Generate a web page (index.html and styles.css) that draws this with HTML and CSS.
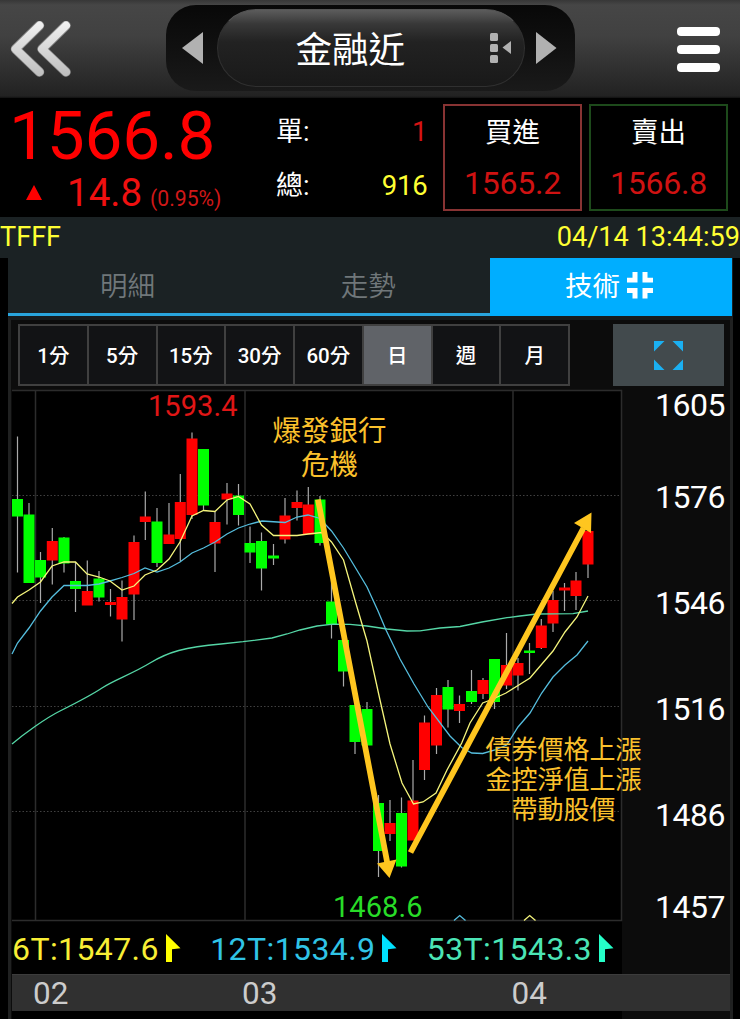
FILE: index.html
```html
<!DOCTYPE html>
<html lang="zh-Hant">
<head>
<meta charset="utf-8">
<title>金融近</title>
<link rel="stylesheet" href="styles.css">
</head>
<body>
<div class="app">
  <header class="topbar">
    <svg class="back" width="64" height="56" viewBox="8 21 64 56">
      <defs><linearGradient id="metal" x1="0" y1="21" x2="0" y2="77" gradientUnits="userSpaceOnUse"><stop offset="0" stop-color="#f2f2f2"/><stop offset="1" stop-color="#bdbdbd"/></linearGradient></defs>
      <path class="back-edge" d="M39.5 25.5 15.5 49 39.5 72M66 25.5 42 49 66 72"/>
      <path class="back-face" d="M39.5 25.5 15.5 49 39.5 72M66 25.5 42 49 66 72"/>
    </svg>
    <div class="switcher">
      <svg width="22" height="32" viewBox="0 0 22 32"><path class="gray" d="M0 16 21 0V32Z"/></svg>
      <div class="pill">
        <span class="title">金融近</span>
        <svg class="list-icon" width="22" height="30" viewBox="0 0 22 30"><rect class="gray" width="8" height="8" rx="1.5"/><rect class="gray" y="11" width="8" height="8" rx="1.5"/><rect class="gray" y="22" width="8" height="8" rx="1.5"/><path class="gray" d="M12.500 14.500 21 8V21Z"/></svg>
      </div>
      <svg width="22" height="32" viewBox="0 0 22 32"><path class="gray" d="M20.500 16 0 0V32Z"/></svg>
    </div>
    <div class="menu"><i></i><i></i><i></i></div>
  </header>

  <section class="quote">
    <div class="price">
      <div class="last">1566.8</div>
      <div class="change"><span class="up"></span><span class="diff">14.8</span><span class="pct">(0.95%)</span></div>
    </div>
    <div class="volume">
      <div class="vol-row"><span>單:</span><span class="one">1</span></div>
      <div class="vol-row"><span>總:</span><span class="total">916</span></div>
    </div>
    <div class="deal buy"><span>買進</span><b>1565.2</b></div>
    <div class="deal sell"><span>賣出</span><b>1566.8</b></div>
  </section>

  <div class="status"><span>TFFF</span><span>04/14 13:44:59</span></div>

  <nav class="tabs">
    <div class="tab">明細</div>
    <div class="tab">走勢</div>
    <div class="tab active">技術
      <svg width="26" height="27" viewBox="0 0 26 27"><path d="M5.500 0H10.500V10.500H0V5.700H5.500ZM15.500 0H20.500V5.700H26V10.500H15.500ZM0 16H10.500V26.500H5.500V21H0ZM15.500 16H26V21H20.500V26.500H15.500Z"/></svg>
    </div>
  </nav>

  <main class="panel">
    <div class="tools">
      <div class="periods"><span>1分</span><span>5分</span><span>15分</span><span>30分</span><span>60分</span><span class="on">日</span><span>週</span><span>月</span></div>
      <div class="full"><svg width="29" height="29" viewBox="0 0 29 29"><path d="M0 0H10.500L0 10.500ZM18.500 0H29V10.500ZM0 18.500 10.500 29H0ZM29 18.500V29H18.500Z"/></svg></div>
    </div>
    <svg class="chart" width="717" height="532" viewBox="12 389 717 532">
      <rect class="plot" x="12" y="390.5" width="609.500" height="530"/>
      <path class="grid" d="M12 390.500H621.500V920.500H12M35.500 390V920M245 390V920M513 390V920"/>
      <path class="dots" d="M12 495.500H621M12 600.500H621M12 706.500H621M12 811.500H621"/>
      <g id="candles"></g>
      <path class="ma ma53" d="M12 744C25 733 46 718 60 711S90 696 102 688S132 674 150 663S185 647 221 644L243 641.700L272 638L287 634L300 630L317 626L333 624.200L350 624.300L367 626L387 629L407 631L420 630.800L440 628L460 626.500L482 622L507 617.700L520 616L537 614L573 613.700L588 611"/>
      <path class="ma ma12" d="M12 654 17.500 643 29 628 40.500 611 52 597 64 585.500H87L99 584 110 581 122 577.500 134 573.500 145 568 157 572 169 568 180 562 192 553 203.500 548 215 542 227 534 238.500 528 250 524 262 521 285 522.500 297 517 308 515 320 518.500 331.500 531 343.500 548 355 567 367 587 378 611 386 630 400 659 414 684 428 707 450 736 461.700 747.500 471.700 753 482.700 753.500 495 750 506.700 745 518 727 530 713 541.700 693 553 677 565 665 577 655 588 641"/>
      <path class="ma ma6" d="M12 603.500 17.500 597 29 590 40.500 582 52 566 64 562H75.500L87 574 99 577 110 581 122 590 134 586 145 575 157 570 169 559 180 542 192 516 203.500 510.500 215 511.500 227 500 238.500 496.500 250 504 261.500 525 273.500 535.500H297L308 534 322 532.500 331.500 542 343.500 560 355.500 602 367 641 380 700 390 744 402 783 413.500 804 423 802 436 793 447 770 461.700 743 470 723 482.700 703 493 699 506 693 530 678 553 651 565 632 577 617 588 596"/>
      <path class="ma ma12" d="M454 920.500 459.700 915.500 465.500 920.500"/>
      <path class="ma ma6" d="M524 920.500 529.700 915.500 535.500 920.500"/>
      <path class="arrow" d="M318 499.500 387.500 864M410.500 852.500 583.500 528"/>
      <path class="head" d="M377 863.500 396.500 859.500 389.500 878ZM591.500 512.500 591 533 574 523Z"/>
      <text class="num high" x="148" y="415.500" textLength="89.500">1593.4</text>
      <text class="num low" x="333" y="916.500" textLength="89.500">1468.6</text>
      <g class="note note-lg"><text x="329.500" y="441" textLength="114">爆發銀行</text><text x="329.500" y="474.500" textLength="57">危機</text></g>
      <g class="note"><text x="563.500" y="759" textLength="156">債券價格上漲</text><text x="563.500" y="789" textLength="156">金控淨值上漲</text><text x="563.500" y="819" textLength="104">帶動股價</text></g>
      <g class="axis"><text x="725.500" y="416" textLength="70.500">1605</text><text x="725.500" y="507.500" textLength="70.500">1576</text><text x="725.500" y="614" textLength="70.500">1546</text><text x="725.500" y="720" textLength="70.500">1516</text><text x="725.500" y="826" textLength="70.500">1486</text><text x="725.500" y="917.500" textLength="70.500">1457</text></g>
    </svg>
    <div class="averages">
      <div class="avg y"><span>6T:1547.6</span><svg width="15" height="28" viewBox="0 0 15 28"><path d="M0 0 14.500 14.200 6 15.200V28H0Z"/></svg></div>
      <div class="avg c"><span>12T:1534.9</span><svg width="15" height="28" viewBox="0 0 15 28"><path d="M0 0 14.500 14.200 6 15.200V28H0Z"/></svg></div>
      <div class="avg g"><span>53T:1543.3</span><svg width="15" height="28" viewBox="0 0 15 28"><path d="M0 0 14.500 14.200 6 15.200V28H0Z"/></svg></div>
    </div>
    <div class="months"><span>02</span><span>03</span><span>04</span></div>
    <div class="foot"></div>
  </main>
</div>
<script src="chart.js"></script>
</body>
</html>
```
FILE: styles.css
```css
* { box-sizing: border-box; }
body { margin: 0; background: #000; font-family: Roboto, "Noto Sans CJK TC", sans-serif; color: #fff; }
svg { display: block; flex: none; }
.app { width: 740px; height: 1019px; overflow: hidden; display: flex; flex-direction: column; }

.topbar { height: 98px; flex: none; display: flex; align-items: flex-start; background: linear-gradient(#373737 0, #464646 5px, #414141 35px, #222 96px, #111 98px); }
.back { margin: 21px 0 0 8px; }
.back path { fill: none; stroke-linecap: round; stroke-linejoin: round; }
.back-edge { stroke: #888; stroke-width: 9.500; }
.back-face { stroke: url(#metal); stroke-width: 8; }
.switcher { margin: 5px 0 0 94px; width: 409px; height: 86px; border-radius: 30px; background: linear-gradient(#080808, #121212 60%, #1a1a1a); display: flex; align-items: center; justify-content: space-between; padding: 0 17px 0 16px; }
.gray { fill: #b1b1b1; }
.pill { width: 308px; height: 78px; margin-right: -1px; border-radius: 39px; border: 1.500px solid #303030; border-top-color: #555; background: linear-gradient(#5c5c5c 0, #383838 14px, #222 32px, #191919); display: flex; align-items: center; padding-left: 78px; }
.title { font-size: 36.500px; line-height: 50px; width: 110px; padding-top: 5px; }
.list-icon { margin-left: 84px; margin-bottom: 1px; }
.menu { margin: 27px 0 0 102px; display: flex; flex-direction: column; gap: 9.500px; }
.menu i { width: 43px; height: 8.500px; border-radius: 4px; background: #fff; }

.quote { height: 119px; flex: none; display: flex; background: #000; }
.price { width: 276px; padding: 5px 0 0 9px; color: #f00; }
.last { font-size: 67.500px; letter-spacing: -.2px; line-height: 66px; height: 70px; }
.change { display: flex; align-items: baseline; line-height: 40px; }
.up { margin-left: 17px; border: solid transparent; border-width: 0 8px 15px; border-bottom-color: #f00; transform: translateY(-6px); }
.diff { margin-left: 25px; width: 76px; font-size: 38.500px; color: #f01010; }
.pct { margin-left: 7px; font-size: 21.200px; color: #d01818; }
.volume { width: 151.500px; padding-top: 7px; font-size: 27.500px; }
.vol-row { height: 54px; line-height: 54px; display: flex; justify-content: space-between; }
.vol-row span:first-child { font-size: 27px; }
.one { color: #d41414; }
.total { color: #ff3; letter-spacing: -.2px; }
.deal { margin: 6px 0 0 15.500px; width: 139px; height: 107px; border: 2px solid #833; display: flex; flex-direction: column; align-items: center; font-size: 27.500px; }
.deal + .deal { margin-left: 7px; }
.sell { border-color: #1d4a1b; }
.deal span { line-height: 54px; }
.deal b { font-weight: 400; font-size: 32px; line-height: 47px; letter-spacing: -.2px; color: #cf1212; }

.status { height: 41px; flex: none; background: #1b2224; color: #ff3; font-size: 27.100px; line-height: 41px; display: flex; justify-content: space-between; }
.tabs { height: 58px; flex: none; margin: 0 7.500px 0 8px; display: flex; background: #1b2224; }
.tab { flex: 1; border-bottom: 3px solid #29a5de; display: flex; align-items: center; justify-content: center; color: #70777a; font-size: 27.500px; line-height: 54px; padding: 2px 2px 0 0; }
.tab:not(.active) { font-weight: 350; }
.tab.active { background: #00aeff; border-color: #00aeff; color: #fff; gap: 7px; padding-right: 4px; }
.tab svg { fill: #fff; margin-bottom: 2px; }

.panel { flex: 1; margin: 0 7px 0 8px; padding: 4px 1px 0 1px; border: 3px solid #202121; border-top: 4px solid #171c1e; background: #0c0c0c; }
.tools { display: flex; justify-content: space-between; height: 65px; padding: 0 5px 0 6px; }
.periods { display: flex; width: 552px; height: 62px; border: 2px solid #404040; background: #121315; }
.periods span { flex: 1; border-right: 2px solid #404040; text-align: center; font-size: 20.500px; line-height: 60px; font-weight: 500; }
.periods span:last-child { border: 0; }
.periods .on { background: #606368; }
.full { width: 111px; height: 62px; background: #424a4d; display: flex; align-items: center; justify-content: center; fill: #1bb0f2; }

.chart { overflow: visible; font-family: Roboto, "Noto Sans CJK TC", sans-serif; }
.plot { fill: #000; }
.grid { fill: none; stroke: #2c2c2c; stroke-width: 1.500; }
.dots { stroke: #404040; stroke-width: 1; stroke-dasharray: 1.500 2; }
.wick { stroke: #aaa; stroke-width: 1.200; }
.rise { fill: #f00; }
.fall { fill: #0f0; }
.ma { fill: none; stroke-width: 1.300; }
.ma6 { stroke: #f5f57c; }
.ma12 { stroke: #55bddd; }
.ma53 { stroke: #55d6a6; }
.arrow { fill: none; stroke: #ffc61f; stroke-width: 5.800; }
.head { fill: #ffc61f; }
.num { font-size: 29px; }
.high { fill: #e01616; }
.low { fill: #28dc28; }
.note { font-size: 26px; fill: #fbc12c; text-anchor: middle; }
.note-lg { font-size: 28.500px; }
.axis { font-size: 32px; fill: #fff; text-anchor: end; }

.averages { width: 610px; height: 53px; background: #000; display: flex; justify-content: space-between; align-items: center; font-size: 32px; letter-spacing: .4px; line-height: 50px; padding-right: 8px; }
.avg { display: flex; align-items: center; gap: 7px; white-space: nowrap; }
.avg span { padding-top: 3px; }
.y { color: #f8ee35; fill: #ff0; }
.c { color: #30c4e6; fill: #00e1ff; }
.g { color: #4be5b6; fill: #25ffc8; }
.months { height: 37px; margin-right: -1px; background: #303030; border-top: 1px solid #3c3c3c; display: flex; padding-left: 21px; font-size: 31.500px; line-height: 37px; color: #ccc; }
.months span { width: 209px; }
.months span:nth-child(2) { width: 269.500px; }
.foot { width: 610px; height: 8px; background: #000; }
```
FILE: chart.js
```js
// x, high, low, body top, body bottom, direction
const bars = [
[17.5,436.5,572.5,499,516.5,0],[29,503,583,514.5,583,0],[40.5,552,603,560,577.5,0],[52.3,528,584.5,541,560.5,1],[64,537,572.5,537.5,563.5,0],
[75.5,562,612,581,589,0],[87.3,560.5,605,591,605.5,1],[99,571,601.5,578.5,597.5,0],[110.5,589,616.5,602,605,1],[122,580.5,641.5,597,619.5,1],
[134,535.5,620,542,594.5,1],[145.3,491.5,540,516.5,522,1],[157,508,567,521.5,563,0],[169,503,543,534.5,544,1],[180.3,474,561.5,502,539,1],
[192,432.5,519,438.5,515,1],[203.5,449,510,449,505.5,0],[215,512,572,522,543.5,1],[227,483,524.5,493.5,499.5,1],[238.5,484,525.5,495.5,515,0],
[250,526.5,563,543,552.5,0],[261.5,532.5,590.5,541,568.5,0],[273.5,544,565,555.5,558.5,0],[285,498,543.5,515.5,539.5,1],[297,490.5,520.5,502,508,1],
[308.3,487,534,504.5,534.5,1],[320,496,545.5,499.5,543,0],[331.5,580,638.5,601.5,624.5,0],[343.5,640,686.5,640,671.5,0],[355,705,754,705,742,0],
[367,702,745,709,745.5,0],[378.5,795,877,803,851,0],[390,800,841,823,834,1],[401.5,797.5,867.5,813,866.5,0],[413,760,840,800.5,840.5,1],
[424.5,715.5,780,722.5,770,1],[436.5,688,754,695,745.5,1],[448,680,727.5,687,709.5,0],[459.5,695.5,723,704,711,1],[471.5,670,704,691,702,0],
[483,678,699,680,694,1],[494.5,659,709,659,702,0],[506.5,633,689,665,685.5,1],[518,658,690.5,663,675.5,1],[529.5,643,674,650.5,653,0],
[541.3,619,649,625.5,648,1],[553,591,632,600,623.5,1],[564.5,583,611,587.5,590.5,1],[576,572,610,580.5,596,1],[588,531,578,531,564.5,1]
];
document.getElementById("candles").innerHTML = bars.map(([x, hi, lo, top, bottom, up]) =>
  `<path class="wick" d="M${x} ${hi}V${lo}"/><rect class="${up ? "rise" : "fall"}" x="${x - 5.5}" y="${top}" width="11" height="${bottom - top}"/>`
).join("");
```
